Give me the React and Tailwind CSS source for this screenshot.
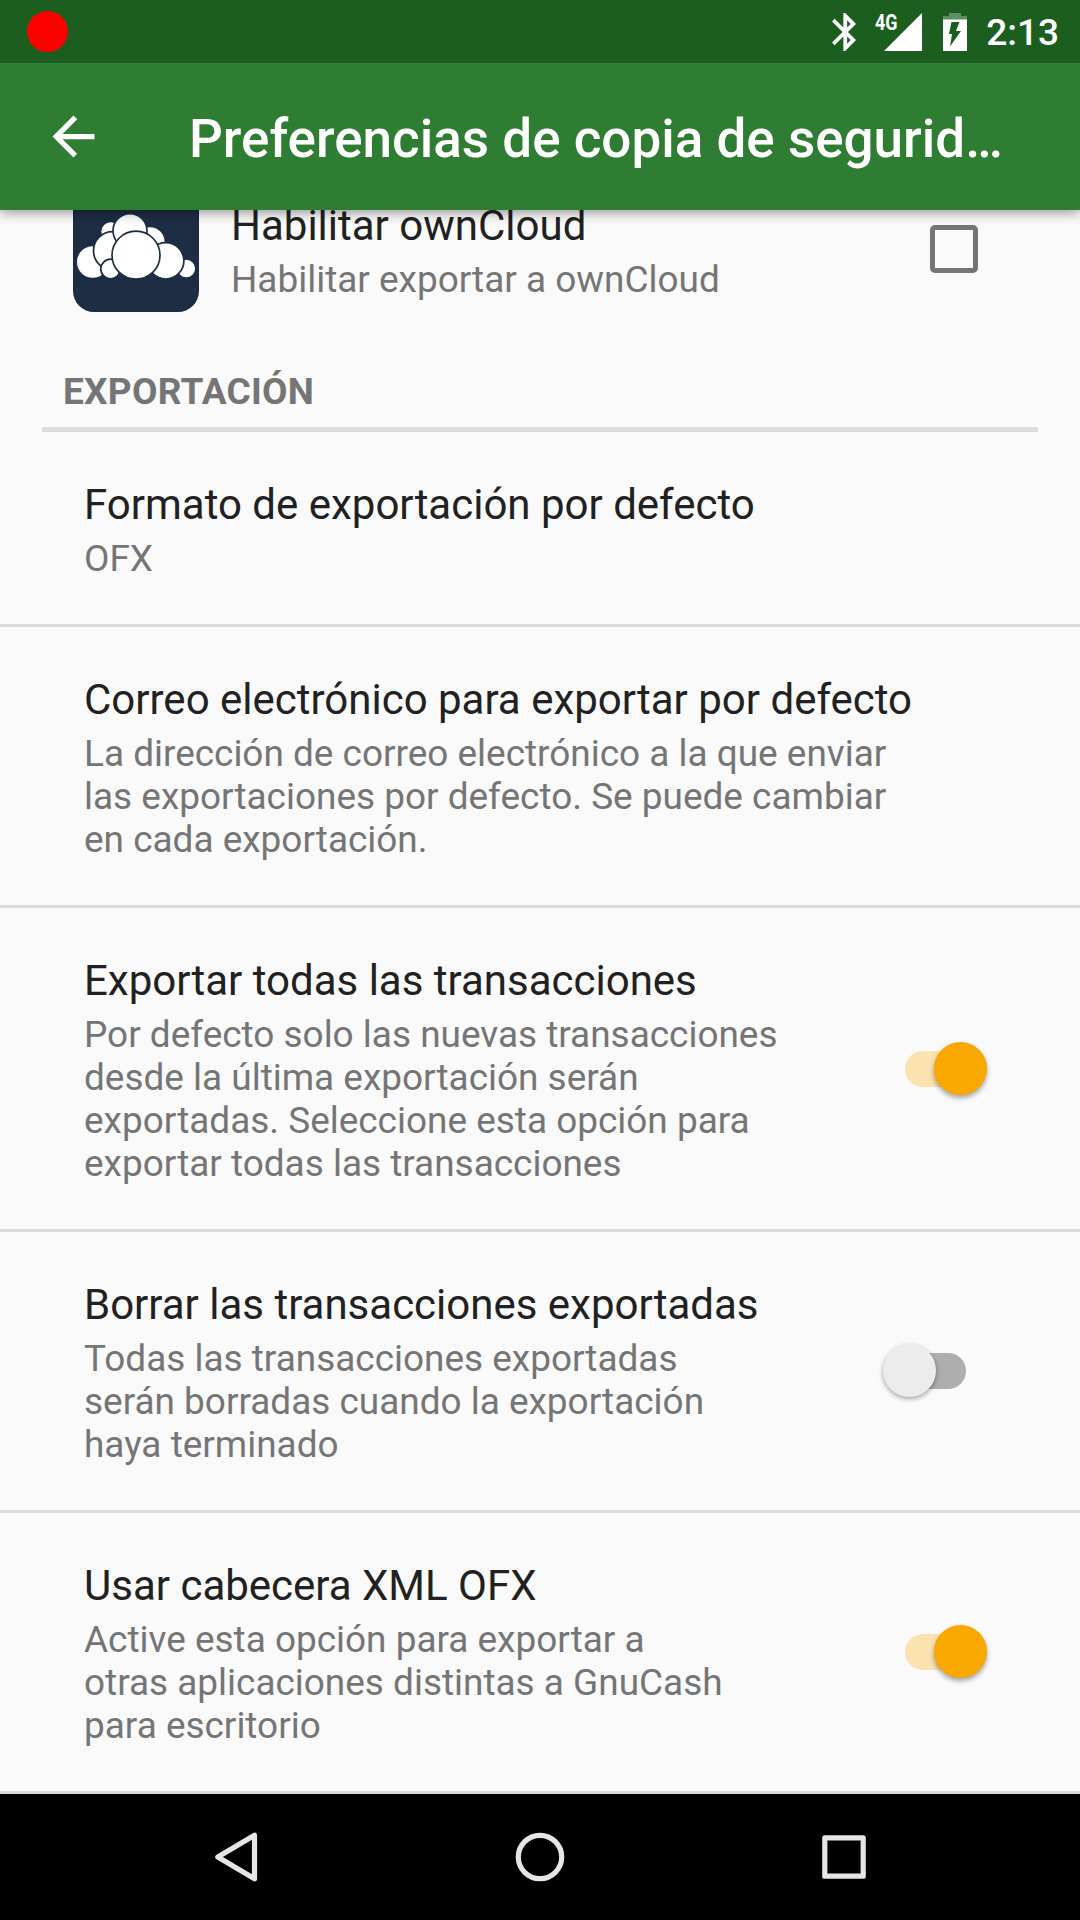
import React from "react";

const clouds = [
  [19.7, 76, 16.6],
  [113.3, 82.6, 9.6],
  [37.7, 45.6, 10.2],
  [77, 55.9, 15.4],
  [39.7, 64.8, 19.2],
  [92.7, 74.8, 18.2],
  [37.6, 83, 9.8],
  [57, 44.7, 17],
  [63, 69.2, 24],
];

function OwnCloudIcon() {
  return (
    <svg className="h-[126px] w-[126px]" viewBox="0 0 126 126">
      <rect width="126" height="126" rx="21" fill="#1d2d44" />
      {clouds.map(([cx, cy, r]) => (
        <circle key={`${cx}-${cy}`} cx={cx} cy={cy} r={r} fill="#fff" stroke="#1d2d44" strokeWidth="1.7" />
      ))}
    </svg>
  );
}

function Switch({ on }) {
  return on ? (
    <div className="mr-[93px] mb-px flex h-[53px] w-[83px] shrink-0 items-center">
      <div className="mt-px ml-px h-9 w-[61px] rounded-full bg-[#fce2ae]" />
      <div className="-ml-8 h-[53px] w-[53px] shrink-0 rounded-full bg-[#f9a800] shadow-[0_3px_5px_rgba(0,0,0,0.35)]" />
    </div>
  ) : (
    <div className="mr-[114px] mb-px flex h-[53px] w-[83px] shrink-0 items-center">
      <div className="z-10 h-[53px] w-[53px] shrink-0 rounded-full bg-[#ececec] shadow-[0_2px_5px_rgba(0,0,0,0.35)]" />
      <div className="mt-px -ml-8 h-9 w-[62px] shrink-0 rounded-full bg-[#aeaeae]" />
    </div>
  );
}

function Preference({ title, lines, children }) {
  return (
    <div className="flex items-center justify-between border-b-[3px] border-[#dcdcdc] pl-[84px]">
      <div className="pt-12 pb-11 whitespace-nowrap">
        <PreferenceText title={title} lines={lines} />
      </div>
      {children}
    </div>
  );
}

function PreferenceText({ title, lines }) {
  return (
    <>
      <div className="mb-2 h-[49px] text-[42px] leading-[49px] text-[#212121]">{title}</div>
      <div className="text-[36.950px] leading-[43px] text-[#757575]">
        {lines.map((line) => (
          <div key={line}>{line}</div>
        ))}
      </div>
    </>
  );
}

function StatusBar() {
  return (
    <div className="z-20 flex h-[63px] shrink-0 items-center bg-[#1b5e20] pr-[21px] pl-[27px] text-white">
      <div className="h-[41px] w-[41px] rounded-full bg-[#ff0000]" />
      <svg className="ml-auto h-[38px] w-[24px]" viewBox="5 2 12.71 20" fill="#fff">
        <path d="M17.71 7.71L12 2h-1v7.59L6.41 5 5 6.41 10.59 12 5 17.59 6.41 19 11 14.41V22h1l5.71-5.71-4.3-4.29 4.3-4.29zM13 5.83l1.88 1.88L13 9.59V5.83zm1.88 10.46L13 18.17v-3.76l1.88 1.88z" />
      </svg>
      <svg className="ml-[19px] h-[38px] w-[47px] overflow-visible" viewBox="0 0 47 38">
        <path d="M9 38L47 0V38z" fill="#fff" />
        <text x="0" y="17.3" fontSize="22.500" fontWeight="700" textLength="22.500" lengthAdjust="spacingAndGlyphs" fill="#fff">4G</text>
      </svg>
      <svg className="ml-[21px] h-[38px] w-[24px]" viewBox="0 0 24 38">
        <path d="M6 0h12v3h6v4H0V3h6z" fill="#fff" opacity=".3" />
        <path fillRule="evenodd" d="M0 6.500H24V38H0zM8.500 9h8l-3.500 9h5L7 33.500l2-12.500H6z" fill="#fff" />
      </svg>
      <div className="ml-[19px] pt-[3px] text-[37px] leading-[44px] font-medium">2:13</div>
    </div>
  );
}

export default function App() {
  return (
    <div className="flex h-[1920px] w-[1080px] flex-col overflow-hidden bg-[#fafafa] font-['Roboto',sans-serif]">
      <StatusBar />
      <header className="z-10 flex h-[147px] shrink-0 items-center bg-[#2e7d32] pl-[42px] text-white shadow-[0_2px_12px_rgba(0,0,0,0.45)]">
        <svg className="h-[63px] w-[63px]" viewBox="0 0 24 24" fill="#fff">
          <path d="M20 11H7.830l5.590-5.590L12 4l-8 8 8 8 1.410-1.410L7.830 13H20v-2z" />
        </svg>
        <h1 className="ml-[84px] pt-[5px] text-[53px] leading-[62px] font-medium whitespace-nowrap">
          Preferencias de copia de segurid…
        </h1>
      </header>

      <main className="h-[1584px] shrink-0 overflow-hidden">
        <div className="-mt-[57px] flex h-[192px] items-center pl-[73px]">
          <OwnCloudIcon />
          <div className="ml-8 pt-1">
            <PreferenceText title="Habilitar ownCloud" lines={["Habilitar exportar a ownCloud"]} />
          </div>
          <div className="mr-[102px] ml-auto h-12 w-12 rounded-[5px] border-[5.500px] border-[#757575]" />
        </div>
        <div className="mx-[42px] h-[87px] border-b-[5px] border-[#dcdcdc] pt-[25px] pl-[21px] text-[37px] leading-[43px] font-bold tracking-[0.25px] text-[#757575]">
          EXPORTACIÓN
        </div>
        <Preference title="Formato de exportación por defecto" lines={["OFX"]} />
        <Preference
          title="Correo electrónico para exportar por defecto"
          lines={[
            "La dirección de correo electrónico a la que enviar",
            "las exportaciones por defecto. Se puede cambiar",
            "en cada exportación.",
          ]}
        />
        <Preference
          title="Exportar todas las transacciones"
          lines={[
            "Por defecto solo las nuevas transacciones",
            "desde la última exportación serán",
            "exportadas. Seleccione esta opción para",
            "exportar todas las transacciones",
          ]}
        >
          <Switch on />
        </Preference>
        <Preference
          title="Borrar las transacciones exportadas"
          lines={["Todas las transacciones exportadas", "serán borradas cuando la exportación", "haya terminado"]}
        >
          <Switch />
        </Preference>
        <Preference
          title="Usar cabecera XML OFX"
          lines={["Active esta opción para exportar a", "otras aplicaciones distintas a GnuCash", "para escritorio"]}
        >
          <Switch on />
        </Preference>
      </main>

      <nav className="flex h-[126px] shrink-0 items-center justify-between bg-black pr-[211px] pl-[211px]">
        <svg className="h-[54px] w-[50px]" viewBox="0 0 50 54" fill="none" stroke="#e6e6e6" strokeWidth="5.200" strokeLinejoin="round">
          <path d="M43.500 5.200V48.800L6.800 27z" />
        </svg>
        <svg className="h-[54px] w-[54px]" viewBox="0 0 54 54" fill="none" stroke="#e6e6e6" strokeWidth="5.200">
          <circle cx="27" cy="27" r="21.700" />
        </svg>
        <svg className="h-[54px] w-[50px]" viewBox="0 0 50 54" fill="none" stroke="#e6e6e6" strokeWidth="5.200" strokeLinejoin="round">
          <rect x="5.800" y="7.800" width="38.400" height="38.400" />
        </svg>
      </nav>
    </div>
  );
}
